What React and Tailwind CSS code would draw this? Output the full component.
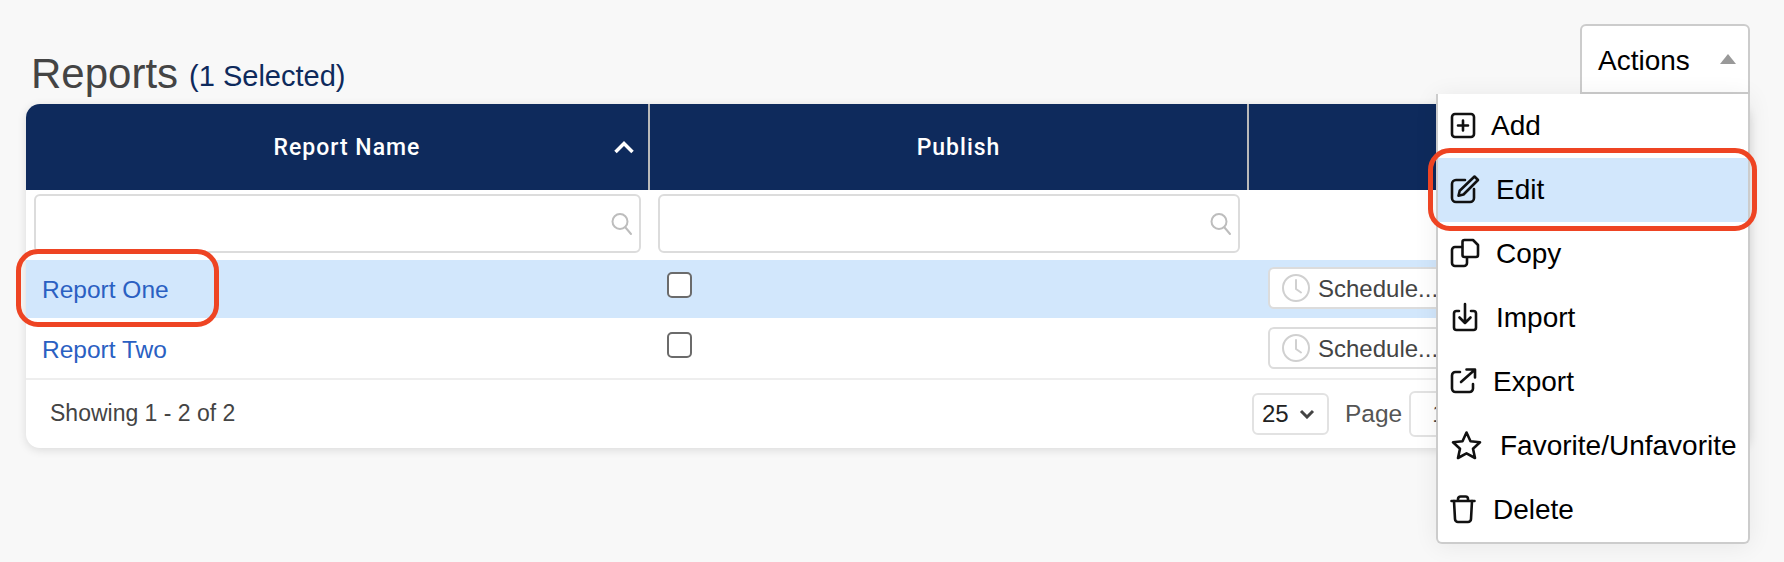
import React from 'react';

const FONT = "font-['Liberation_Sans',Arial,sans-serif]";

const Icon = ({ children }) => (
    <svg width="36" height="32" viewBox="0 0 36 32" fill="none" stroke="#111" strokeWidth="2.6" strokeLinecap="round" strokeLinejoin="round" className="shrink-0">
        {children}
    </svg>
);

const MENU_ITEMS = [
    {
        label: 'Add',
        textClass: 'ml-[7px]',
        icon: (
            <>
                <rect x="4" y="4" width="22" height="23" rx="3" />
                <path d="M15 10.5v10M10 15.5h10" />
            </>
        ),
    },
    {
        label: 'Edit',
        textClass: 'ml-[12px]',
        icon: (
            <>
                <path d="M17 6H8a4 4 0 0 0-4 4v14a4 4 0 0 0 4 4h14a4 4 0 0 0 4-4v-9" />
                <path d="M26.5 2.5l3.5 3.5-14.5 14.5-5 1.2 1.2-5z" />
            </>
        ),
        active: true,
    },
    {
        label: 'Copy',
        textClass: 'ml-[12px]',
        icon: (
            <>
                <path d="M14 9H7a3 3 0 0 0-3 3v13a3 3 0 0 0 3 3h9a3 3 0 0 0 3-3v-5" />
                <path d="M16.5 2H25l5 5v10a2 2 0 0 1-2 2H16.5a2 2 0 0 1-2-2V4a2 2 0 0 1 2-2z" />
            </>
        ),
    },
    {
        label: 'Import',
        textClass: 'ml-[12px]',
        icon: (
            <>
                <path d="M11 9H8.5A2.5 2.5 0 0 0 6 11.5v14A2.5 2.5 0 0 0 8.5 28h17a2.5 2.5 0 0 0 2.5-2.5v-14A2.5 2.5 0 0 0 25.5 9H23" />
                <path d="M17 2v19M11.5 15.5l5.5 5.5 5.5-5.5" />
            </>
        ),
    },
    {
        label: 'Export',
        textClass: 'ml-[9px]',
        icon: (
            <>
                <path d="M12 6H7.5A3.5 3.5 0 0 0 4 9.5v13A3.5 3.5 0 0 0 7.5 26h14a3.5 3.5 0 0 0 3.5-3.5V18" />
                <path d="M13 16L26.5 4M18.5 3.5H27v8" />
            </>
        ),
    },
    {
        label: 'Favorite/Unfavorite',
        textClass: 'ml-[16px]',
        icon: <polygon points="18.5,2.5 22.5,11.2 32,12.3 25,18.7 27,28 18.5,23.3 10,28 12,18.7 5,12.3 14.5,11.2" />,
    },
    {
        label: 'Delete',
        textClass: 'ml-[9px]',
        icon: (
            <>
                <path d="M3.5 7h23M10 7V5a2.5 2.5 0 0 1 2.5-2.5h5A2.5 2.5 0 0 1 20 5v2" />
                <path d="M6 7l1 18a3 3 0 0 0 3 3h10a3 3 0 0 0 3-3l1-18" />
            </>
        ),
    },
];

const SearchIcon = () => (
    <svg width="22" height="24" viewBox="0 0 22 24" fill="none" stroke="#bdbdbd" strokeWidth="2" strokeLinecap="round">
        <circle cx="9" cy="9.5" r="7.5" />
        <path d="M14.5 15.5L20 22" />
    </svg>
);

const ClockIcon = () => (
    <svg width="28" height="28" viewBox="0 0 28 28" fill="none" stroke="#d0d0d0" strokeWidth="2" strokeLinecap="round" strokeLinejoin="round" className="shrink-0">
        <circle cx="14" cy="14" r="13" />
        <path d="M14 6v9l5 3.5" />
    </svg>
);

const Checkbox = () => <div className="w-[25px] h-[26px] border-2 border-[#6b6b6b] rounded-[5px] bg-white"></div>;

const ScheduleButton = () => (
    <div className="w-[240px] h-[42px] flex items-center gap-[8px] pl-[12px] bg-white border-2 border-[#dcdcdc] rounded-[6px] text-[24px] text-[#444]">
        <ClockIcon />
        <span className="pt-[2px]">Schedule...</span>
    </div>
);

const COLUMNS = 'grid grid-cols-[624px_599px_1fr]';

const ReportRow = ({ name, selected }) => (
    <div className={`${COLUMNS} h-[60px] border-b-2 ${selected ? 'bg-[#d2e7fc] border-white' : 'bg-white border-[#eeeeee]'}`}>
        <div className="flex items-center pl-[16px] pt-[2px] text-[24.5px] text-[#2a60c2]">{name}</div>
        <div className="pl-[17px] pt-[12px]"><Checkbox /></div>
        <div className="pl-[19px] pt-[7px]"><ScheduleButton /></div>
    </div>
);

export default function App() {
    return (
        <div className={`relative h-[562px] w-[1784px] overflow-hidden bg-[#f8f8f8] pl-[26px] pr-[34px] ${FONT}`}>
            {/* Title */}
            <div className="h-[104px] flex items-end pl-[5px] gap-[11px]">
                <h1 className="text-[42px] leading-[50px] text-[#444] pb-[5px]">Reports</h1>
                <span className="text-[29px] leading-[38px] text-[#0e2a5c] pb-[9px]">(1 Selected)</span>
            </div>

            {/* Table */}
            <div className="h-[344px] bg-white rounded-[14px] overflow-hidden shadow-[0_2px_10px_rgba(0,0,0,0.12)]">
                <div className={`${COLUMNS} h-[86px] bg-[#0e2a5c] text-white text-[23px] font-['Roboto',sans-serif] font-medium tracking-[1px]`}>
                    <div className="relative flex items-center justify-center pl-[20px] pt-[2px] border-r-2 border-[#b9b9b9]">
                        Report Name
                        <svg width="20" height="14" viewBox="0 0 20 14" fill="none" stroke="#fff" strokeWidth="3.5" className="absolute right-[14px] top-[36px]">
                            <path d="M1.5 12L10 3.5 18.5 12" />
                        </svg>
                    </div>
                    <div className="flex items-center justify-center pl-[20px] pt-[2px] border-r-2 border-[#b9b9b9]">Publish</div>
                    <div></div>
                </div>
                <div className={`${COLUMNS} h-[70px] pt-[4px]`}>
                    <div className="pl-[8px] pr-[9px]">
                        <div className="h-[59px] flex items-center justify-end pr-[6px] border-2 border-[#dcdcdc] rounded-[6px]"><SearchIcon /></div>
                    </div>
                    <div className="pl-[8px] pr-[9px]">
                        <div className="h-[59px] flex items-center justify-end pr-[6px] border-2 border-[#dcdcdc] rounded-[6px]"><SearchIcon /></div>
                    </div>
                    <div></div>
                </div>
                <ReportRow name="Report One" selected />
                <ReportRow name="Report Two" />
                <div className={`${COLUMNS} h-[68px] items-center`}>
                    <div className="col-span-2 pl-[24px] pb-[2px] text-[23px] text-[#444]">Showing 1 - 2 of 2</div>
                    <div className="flex items-center pl-[3px]">
                        <div className="w-[77px] h-[42px] flex items-center gap-[10px] pl-[8px] border-2 border-[#e2e2e2] rounded-[6px] text-[24px] text-[#222]">
                            25
                            <svg width="16" height="10" viewBox="0 0 16 10" fill="none" stroke="#444" strokeWidth="3">
                                <path d="M2 2l6 6 6-6" />
                            </svg>
                        </div>
                        <span className="ml-[16px] text-[24.5px] text-[#555]">Page</span>
                        <div className="ml-[7px] w-[80px] h-[46px] flex items-center pl-[21px] border-2 border-[#e2e2e2] rounded-[6px] text-[24px] text-[#444]">1</div>
                    </div>
                </div>
            </div>

            {/* Actions dropdown */}
            <div className="absolute left-[1436px] top-[24px] w-[314px] text-black">
                <div className="ml-[144px] h-[70px] flex items-center justify-between pl-[16px] pr-[12px] bg-white border-2 border-[#cccccc] rounded-t-[6px] text-[28px]">
                    <span className="pt-[3px]">Actions</span>
                    <svg width="16" height="10" viewBox="0 0 16 10"><path d="M8 0l8 10H0z" fill="#999" /></svg>
                </div>
                <div className="bg-white border-x-2 border-b-2 border-[#cccccc] rounded-b-[6px] shadow-[0_2px_24px_rgba(0,0,0,0.07)]">
                    {MENU_ITEMS.map((item) => (
                        <div key={item.label} className={`h-[64px] flex items-center pl-[10px] text-[28px] ${item.active ? 'bg-[#d2e7fc]' : ''}`}>
                            <Icon>{item.icon}</Icon>
                            <span className={item.textClass}>{item.label}</span>
                        </div>
                    ))}
                </div>
            </div>

            {/* Red callouts */}
            <div className="absolute left-[16px] top-[249px] w-[203px] h-[78px] border-[5px] border-[#ee4423] rounded-[22px]"></div>
            <div className="absolute left-[1428px] top-[148px] w-[329px] h-[83px] border-[5px] border-[#ee4423] rounded-[22px]"></div>
        </div>
    );
}
